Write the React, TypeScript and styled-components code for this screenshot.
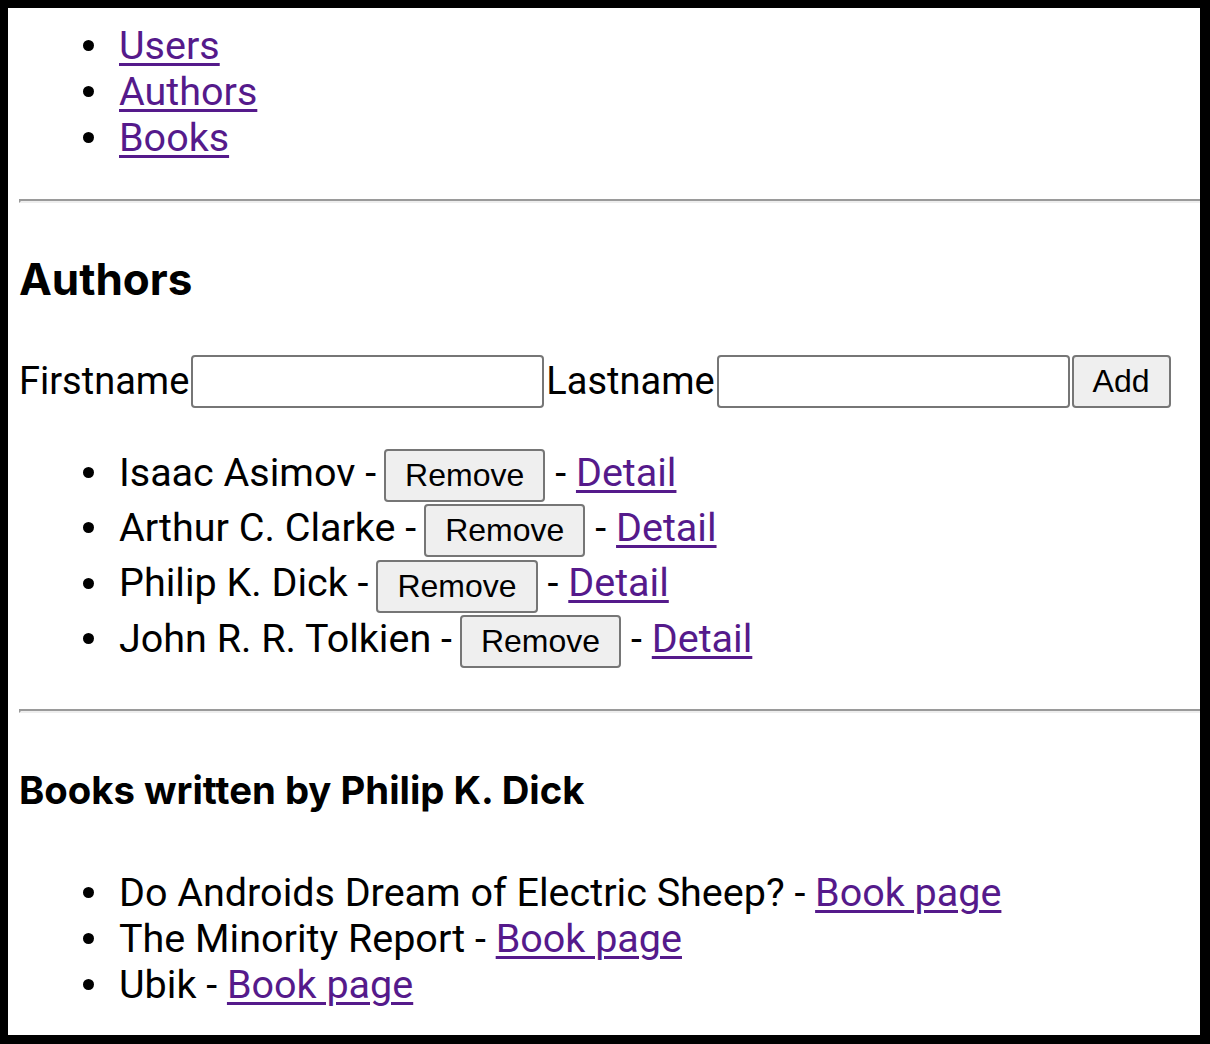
import React from "react";
import styled, { createGlobalStyle } from "styled-components";

const Global = createGlobalStyle`
  html, body {
    margin: 0;
    padding: 0;
    background: #000;
  }
  body {
    font-family: Roboto, "Noto Sans", sans-serif;
    color: #000;
  }
`;

const Frame = styled.div`
  margin: 8px 10px 0 8px;
  height: 1027px;
  background: #fff;
  overflow: hidden;
  padding-left: 11px;
  box-sizing: border-box;
  font-size: 39.5px;
`;

const List = styled.ul<{ $top?: number; $row: number }>`
  margin: ${(p) => p.$top ?? 0}px 0 0 0;
  padding: 0 0 0 100px;
  list-style: none;
  & > li {
    line-height: ${(p) => p.$row}px;
    height: ${(p) => p.$row}px;
    white-space: nowrap;
  }
  & > li::before {
    content: "";
    display: inline-block;
    width: 11px;
    height: 11px;
    border-radius: 50%;
    background: #000;
    margin: 0 25px 0 -36px;
    vertical-align: middle;
    position: relative;
    top: -3px;
  }
`;

const Link = styled.a`
  color: #551a8b;
  text-decoration: underline;
  text-decoration-thickness: 3px;
  text-underline-offset: 4px;
  cursor: pointer;
`;

const Rule = styled.hr<{ $top: number }>`
  margin: ${(p) => p.$top}px -40px 0 0;
  height: 0;
  border: 0;
  border-top: 2px solid #9a9a9a;
  border-bottom: 2px solid #eeeeee;
  border-left: 2px solid #9a9a9a;
`;

const Heading = styled.h2<{ $top: number; $size: number }>`
  margin: ${(p) => p.$top}px 0 0 0;
  font-family: Inter, Roboto, sans-serif;
  font-size: ${(p) => p.$size}px;
  font-weight: 700;
  line-height: 1.2;
`;

const Form = styled.div`
  display: flex;
  align-items: center;
  margin-top: 49px;
  height: 53px;
`;

const Label = styled.label`
  font-size: 38px;
  line-height: 53px;
`;

const Field = styled.input`
  box-sizing: border-box;
  width: 353px;
  height: 53px;
  border: 2px solid #767676;
  border-radius: 4px;
  margin: 0 2px;
  padding: 0 6px;
  font-size: 32px;
  background: #fff;
`;

const Button = styled.button`
  box-sizing: border-box;
  font-family: "Liberation Sans", Arial, sans-serif;
  font-size: 32px;
  color: #000;
  background: #efefef;
  border: 2px solid #767676;
  border-radius: 4px;
  height: 53px;
  padding: 0 19px;
  cursor: pointer;
`;

const Row = styled.li`
  & > button {
    margin: -10px 10px -10px 8px;
    vertical-align: middle;
  }
`;

const authors = [
  "Isaac Asimov",
  "Arthur C. Clarke",
  "Philip K. Dick",
  "John R. R. Tolkien",
];

const books = [
  "Do Androids Dream of Electric Sheep?",
  "The Minority Report",
  "Ubik",
];

export default function App() {
  return (
    <>
      <Global />
      <Frame>
        <List $top={15} $row={46}>
          <li><Link>Users</Link></li>
          <li><Link>Authors</Link></li>
          <li><Link>Books</Link></li>
        </List>
        <Rule $top={38} />
        <Heading $top={50} $size={44}>Authors</Heading>
        <Form>
          <Label>Firstname</Label>
          <Field />
          <Label>Lastname</Label>
          <Field />
          <Button>Add</Button>
        </Form>
        <List $top={37} $row={55.33}>
          {authors.map((a) => (
            <Row key={a}>
              {a} -<Button>Remove</Button>- <Link>Detail</Link>
            </Row>
          ))}
        </List>
        <Rule $top={43} />
        <Heading $top={55} $size={38.3}>Books written by Philip K. Dick</Heading>
        <List $top={56} $row={46}>
          {books.map((b) => (
            <li key={b}>
              {b} - <Link>Book page</Link>
            </li>
          ))}
        </List>
      </Frame>
    </>
  );
}
